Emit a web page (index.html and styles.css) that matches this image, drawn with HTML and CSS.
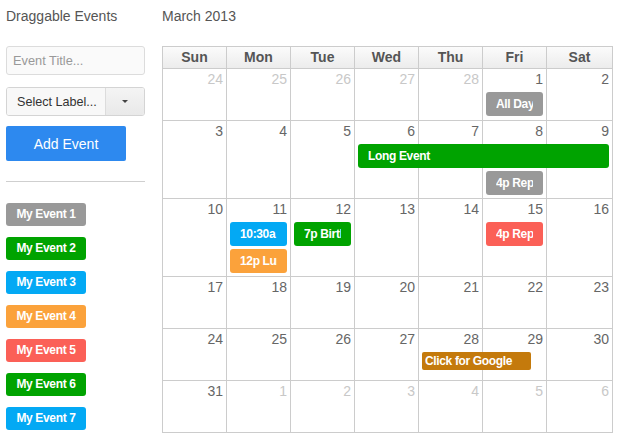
FILE: index.html
```html
<!DOCTYPE html>
<html>
<head>
<meta charset="utf-8">
<link rel="stylesheet" href="styles.css">
</head>
<body>
<div class="page">
  <aside class="sidebar">
    <h4 class="side-title">Draggable Events</h4>
    <input class="title-input" type="text" placeholder="Event Title...">
    <div class="select">
      <span class="select-label">Select Label...</span>
      <span class="select-caret"><span class="caret"></span></span>
    </div>
    <button class="add-btn">Add Event</button>
    <hr class="divider">
    <ul class="chips">
      <li class="chip c-gray">My Event 1</li>
      <li class="chip c-green">My Event 2</li>
      <li class="chip c-blue">My Event 3</li>
      <li class="chip c-orange">My Event 4</li>
      <li class="chip c-red">My Event 5</li>
      <li class="chip c-green">My Event 6</li>
      <li class="chip c-blue">My Event 7</li>
    </ul>
  </aside>
  <main class="cal">
    <h2 class="cal-title">March 2013</h2>
    <div class="grid">
      <div class="head">
        <div class="hd">Sun</div><div class="hd">Mon</div><div class="hd">Tue</div><div class="hd">Wed</div><div class="hd">Thu</div><div class="hd">Fri</div><div class="hd">Sat</div>
      </div>

      <div class="week">
        <div class="days">
          <div class="day other">24</div><div class="day other">25</div><div class="day other">26</div><div class="day other">27</div><div class="day other">28</div><div class="day">1</div><div class="day">2</div>
        </div>
        <div class="events">
          <div class="ev c-gray col6 row1"><span>All Day</span></div>
        </div>
      </div>

      <div class="week">
        <div class="days">
          <div class="day">3</div><div class="day">4</div><div class="day">5</div><div class="day">6</div><div class="day">7</div><div class="day">8</div><div class="day">9</div>
        </div>
        <div class="events">
          <div class="ev c-green span-wed-sat row1"><span>Long Event</span></div>
          <div class="ev c-gray col6 row2"><span>4p Repeating Event</span></div>
        </div>
      </div>

      <div class="week">
        <div class="days">
          <div class="day">10</div><div class="day">11</div><div class="day">12</div><div class="day">13</div><div class="day">14</div><div class="day">15</div><div class="day">16</div>
        </div>
        <div class="events">
          <div class="ev c-blue col2 row1"><span>10:30a Meeting</span></div>
          <div class="ev c-orange col2 row2"><span>12p Lunch</span></div>
          <div class="ev c-green col3 row1"><span>7p Birthday Party</span></div>
          <div class="ev c-red col6 row1"><span>4p Repeating Event</span></div>
        </div>
      </div>

      <div class="week">
        <div class="days">
          <div class="day">17</div><div class="day">18</div><div class="day">19</div><div class="day">20</div><div class="day">21</div><div class="day">22</div><div class="day">23</div>
        </div>
        <div class="events"></div>
      </div>

      <div class="week">
        <div class="days">
          <div class="day">24</div><div class="day">25</div><div class="day">26</div><div class="day">27</div><div class="day">28</div><div class="day">29</div><div class="day">30</div>
        </div>
        <div class="events">
          <div class="ev link span-thu-fri row1"><span>Click for Google</span></div>
        </div>
      </div>

      <div class="week">
        <div class="days">
          <div class="day">31</div><div class="day other">1</div><div class="day other">2</div><div class="day other">3</div><div class="day other">4</div><div class="day other">5</div><div class="day other">6</div>
        </div>
        <div class="events"></div>
      </div>
    </div>
  </main>
</div>
</body>
</html>
```
FILE: styles.css
```css
* { box-sizing: border-box; }
html, body { margin: 0; padding: 0; background: #fff; }
body { font-family: "Liberation Sans", Arial, sans-serif; color: #555; }

.page {
  display: flex;
  gap: 17px;
  padding: 8px 0 0 6px;
}

.sidebar {
  width: 139px;
  display: flex;
  flex-direction: column;
}
.side-title {
  margin: 0;
  font-size: 14px;
  font-weight: normal;
  line-height: 16px;
  color: #555;
  height: 38px;
}
.title-input {
  width: 139px;
  height: 29px;
  border: 1px solid #dcdcdc;
  border-radius: 3px;
  background: #fafafa;
  padding: 0 6px;
  font-family: "Liberation Sans", Arial, sans-serif;
  font-size: 12.8px;
  color: #333;
  outline: none;
}
.title-input::placeholder { color: #999; }

.select {
  margin-top: 12px;
  height: 29px;
  display: flex;
  border: 1px solid #d4d4d4;
  border-radius: 3px;
  overflow: hidden;
}
.select-label {
  flex: 1;
  display: flex;
  align-items: center;
  padding-left: 10px;
  font-size: 12.6px;
  color: #333;
  background: #f8f8f8;
  border-right: 1px solid #dcdcdc;
}
.select-caret {
  width: 38px;
  display: flex;
  align-items: center;
  justify-content: center;
  background: linear-gradient(#f4f4f4, #e9e9e9);
}
.caret {
  width: 0; height: 0;
  border-left: 3px solid transparent;
  border-right: 3px solid transparent;
  border-top: 3px solid #444;
}

.add-btn {
  margin-top: 10px;
  width: 120px;
  height: 35px;
  border: 0;
  border-radius: 2px;
  background: #2d89ef;
  color: #fff;
  font-family: "Liberation Sans", Arial, sans-serif;
  font-size: 14px;
  padding: 0;
}

.divider {
  margin: 20px 0 0 0;
  border: 0;
  border-top: 1px solid #cfcfcf;
  width: 139px;
}

.chips {
  list-style: none;
  margin: 21px 0 0 0;
  padding: 0;
  display: flex;
  flex-direction: column;
  gap: 11px;
}
.chip {
  width: 80px;
  height: 23px;
  border-radius: 3px;
  color: #fff;
  font-weight: bold;
  font-size: 12px;
  letter-spacing: -0.35px;
  line-height: 23px;
  text-align: center;
}

.c-gray { background: #999; }
.c-green { background: #00a300; }
.c-blue { background: #03a9f4; }
.c-orange { background: #fba23b; }
.c-red { background: #fb6057; }

.cal { display: flex; flex-direction: column; }
.cal-title {
  margin: 0;
  font-size: 14px;
  font-weight: normal;
  line-height: 16px;
  color: #555;
  height: 38px;
}

.grid {
  border-top: 1px solid #ccc;
  border-left: 1px solid #ccc;
  width: 451px;
}
.head, .days, .events {
  display: grid;
  grid-template-columns: repeat(6, 64px) 66px;
}
.hd {
  height: 22px;
  border-right: 1px solid #ccc;
  border-bottom: 1px solid #ccc;
  background: linear-gradient(#fbfbfb, #ececec);
  text-align: center;
  font-weight: bold;
  font-size: 14px;
  line-height: 21px;
  color: #555;
}

.week {
  display: grid;
  border-bottom: 1px solid #ccc;
}
.week > .days, .week > .events { grid-area: 1 / 1; }
.days { min-height: 51px; }
.day {
  border-right: 1px solid #ccc;
  text-align: right;
  padding: 2px 3px 0 0;
  font-size: 14px;
  line-height: 16px;
  color: #666;
}
.day.other { color: #c8c8c8; }

.events {
  padding-top: 23px;
  grid-auto-rows: 27px;
  align-content: start;
}
.ev {
  margin: 0 4px 3px 3px;
  height: 24px;
  border-radius: 3px;
  color: #fff;
  font-weight: bold;
  font-size: 12px;
  letter-spacing: -0.35px;
  line-height: 24px;
  padding: 0 10px;
  white-space: nowrap;
}
.ev > span { display: block; overflow: hidden; }
.col2 { grid-column: 2; }
.col3 { grid-column: 3; }
.col6 { grid-column: 6; }
.row1 { grid-row: 1; }
.row2 { grid-row: 2; }
.span-wed-sat { grid-column: 4 / 8; }
.span-thu-fri { grid-column: 5 / 7; }
.ev.link {
  background: #c47a0c;
  width: 109px;
  height: 18px;
  line-height: 18px;
  padding: 0 3px;
  border-radius: 2px;
  justify-self: start;
}
```
